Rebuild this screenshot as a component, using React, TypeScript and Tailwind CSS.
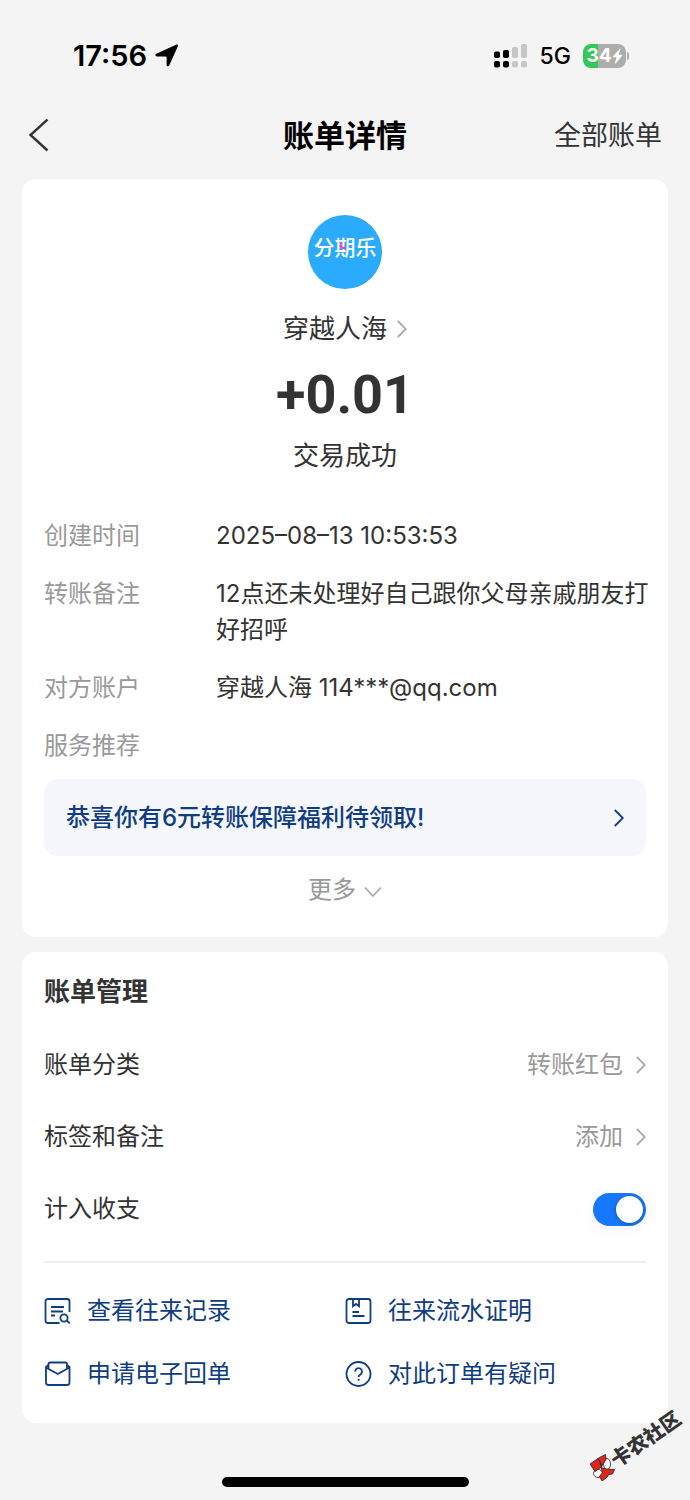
import type { ReactNode } from "react";

const details = [
    { label: "创建时间", value: "2025–08–13 10:53:53" },
    {
        label: "转账备注",
        value: "12点还未处理好自己跟你父母亲戚朋友打好招呼",
    },
    { label: "对方账户", value: "穿越人海 114***@qq.com" },
    { label: "服务推荐", value: "" },
];

export default function App() {
    return (
        <div className="relative flex min-h-screen flex-col bg-[#f4f4f4] font-['Inter','Noto_Sans_CJK_SC',sans-serif] text-2xl leading-9 text-[#333333]">
            <StatusBar />
            <PageHeader />

            <main className="mt-[19px] flex grow flex-col gap-[15px] px-[22px]">
                <BillCard />
                <ManageCard />
            </main>

            <div className="mx-auto mt-[54px] mb-[13px] h-[10px] w-[247px] rounded-full bg-black" />
            <Watermark />
        </div>
    );
}

function StatusBar() {
    return (
        <div className="flex items-center justify-between pt-10 pr-[61px] pl-[73px] leading-8 text-black">
            <div className="flex items-center gap-2">
                <span className="text-[29px] font-semibold">17:56</span>
                <svg viewBox="0 0 24 24" className="size-6">
                    <path d="M21.6.6c1.100-.5 1.900.3 1.400 1.400L14.200 21.600c-.6 1.300-2.600.9-2.600-.6V13.200c0-.5-.3-.8-.8-.8H2c-1.700 0-2.200-2-.6-2.700z" />
                </svg>
            </div>

            <div className="flex items-center gap-3">
                <SignalIcon />
                <span className="text-[23px] font-medium">5G</span>
                <Battery />
            </div>
        </div>
    );
}

function SignalIcon() {
    return (
        <svg viewBox="0 0 34 24" className="h-6 w-[34px]">
            <g fill="#000">
                <rect x="0" y="7.5" width="6" height="6.5" rx="1.8" />
                <rect x="9" y="6" width="6" height="8" rx="1.8" />
                <rect x="0" y="17" width="6" height="6.5" rx="2" />
                <rect x="9" y="17" width="6" height="6.5" rx="2" />
            </g>
            <g fill="#c6c6c6">
                <rect x="18" y="3" width="6" height="11" rx="1.8" />
                <rect x="27" y="0" width="6" height="14" rx="1.8" />
                <rect x="18" y="17" width="6" height="6.5" rx="2" />
                <rect x="27" y="17" width="6" height="6.5" rx="2" />
            </g>
        </svg>
    );
}

function Battery() {
    return (
        <div className="flex items-center gap-px">
            <div className="flex h-6 w-[43px] items-center justify-center rounded-lg bg-linear-to-r from-[#34c759] from-35% to-[#adadad] to-35% text-white">
                <span className="text-[19px] leading-6 font-bold">34</span>
                <svg viewBox="0 0 11 16" className="h-4 w-[11px]" fill="#fff">
                    <path d="M7.8.8.8 8.5c-.3.4-.1.8.3.8h3.5L3 14.8c-.1.6.4.8.8.4l6.5-7.6c.3-.4.1-.8-.4-.8H6.6l1.9-5.500c.2-.6-.3-.9-.7-.5z" />
                </svg>
            </div>
            <div className="h-2 w-[2px] rounded-r-full bg-[#adadad]" />
        </div>
    );
}

function PageHeader() {
    return (
        <header className="mt-10 grid h-12 grid-cols-[1fr_auto_1fr] items-center px-7">
            <button aria-label="返回" className="justify-self-start">
                <svg
                    viewBox="0 0 22 34"
                    className="h-[34px] w-[22px]"
                    fill="none"
                    stroke="#333"
                    strokeWidth="2.4"
                >
                    <path d="M19.5.5 2.5 16l17 15.5" />
                </svg>
            </button>
            <h1 className="text-[31px] font-semibold text-black">账单详情</h1>
            <a href="#bills" className="justify-self-end text-[27px]">
                全部账单
            </a>
        </header>
    );
}

function BillCard() {
    return (
        <section className="flex flex-col rounded-[14px] bg-white px-[22px] pt-9 pb-[29px]">
            <div className="flex flex-col items-center">
                <Avatar />
                <a
                    href="#contact"
                    className="mt-5 flex items-center gap-2.5 text-[26px] leading-10"
                >
                    穿越人海
                    <Chevron className="text-[#aaaaaa]" />
                </a>
                <p className="mt-[14px] font-['Roboto',sans-serif] text-[54px] leading-16 font-bold">
                    +0.01
                </p>
                <p className="mt-[9px] text-[26px] leading-10">交易成功</p>
            </div>

            <dl className="mt-[42px] flex flex-col gap-[22px]">
                {details.map((item) => (
                    <div key={item.label} className="-mr-2 flex">
                        <dt className="w-43 shrink-0 text-[#999999]">
                            {item.label}
                        </dt>
                        <dd>{item.value}</dd>
                    </div>
                ))}
            </dl>

            <button className="mt-[15px] flex h-[77px] items-center justify-between rounded-[14px] bg-[#f5f7fc] px-[22px] font-medium text-[#0f3c82]">
                恭喜你有6元转账保障福利待领取!
                <Chevron className="text-[#0f3c82]" />
            </button>

            <button className="mt-4 flex items-center gap-2 self-center text-[#999999]">
                更多
                <svg
                    viewBox="0 0 18 12"
                    className="mt-1 h-3 w-[18px]"
                    fill="none"
                    stroke="#aaa"
                    strokeWidth="1.8"
                >
                    <path d="m1 1.5 8 8.5 8-8.5" />
                </svg>
            </button>
        </section>
    );
}

function Avatar() {
    return (
        <div className="relative flex size-[74px] justify-center rounded-full bg-[#2aabfd] pt-[17px]">
            <span className="text-[21px] leading-8 font-medium whitespace-nowrap text-white">
                分期乐
            </span>
            <svg
                viewBox="0 0 8 8"
                className="absolute top-[27px] left-[31px] size-2"
                fill="none"
                stroke="#c85cc4"
                strokeWidth="2.4"
            >
                <path d="M2 0v6h5" />
            </svg>
        </div>
    );
}

function Chevron({ className }: { className: string }) {
    return (
        <svg
            viewBox="0 0 10 18"
            className={`h-[18px] w-[10px] ${className}`}
            fill="none"
            stroke="currentColor"
            strokeWidth="1.8"
        >
            <path d="m.8 1 8 8-8 8" />
        </svg>
    );
}

function ManageCard() {
    return (
        <section className="rounded-[14px] bg-white px-[22px] pt-[22px] pb-[31px]">
            <h2 className="text-[26px] leading-9 font-semibold">账单管理</h2>

            <div className="mt-[37px] flex flex-col gap-9">
                <ManageRow label="账单分类" value="转账红包" />
                <ManageRow label="标签和备注" value="添加" />
                <label className="flex items-center justify-between">
                    计入收支
                    <input
                        type="checkbox"
                        role="switch"
                        defaultChecked
                        className="flex h-[33px] w-[53px] appearance-none items-center rounded-full bg-[#d9d9d9] px-[3px] shadow-[0_4px_20px_rgba(0,0,0,0.04)] before:size-[27px] before:rounded-full before:bg-white before:shadow-[0_1px_4px_rgba(0,0,0,0.3)] checked:justify-end checked:bg-[#1677ff]"
                    />
                </label>
            </div>

            <hr className="mt-[34px] border-t-2 border-[#eeeeee]" />

            <div className="mt-[30px] grid grid-cols-2 gap-y-[27px] text-[#0f3c82]">
                <ActionLink label="查看往来记录">
                    <path d="M25.5 14V3.500A2.500 2.500 0 0 0 23 1H4a2.500 2.500 0 0 0-2.500 2.500v19A2.500 2.500 0 0 0 4 25h11.500" />
                    <path d="M7 9h13M7 13.500h12M7 17.500h4" />
                    <circle cx="20" cy="20" r="3.6" />
                    <path d="m22.8 22.500 3 2.800" />
                </ActionLink>
                <ActionLink label="往来流水证明">
                    <rect x="1.5" y="1" width="24" height="24" rx="2.5" />
                    <path d="M8 1v7.300L11 6l3 2.300V1M7.500 14H14M7.500 18h12" />
                </ActionLink>
                <ActionLink label="申请电子回单">
                    <path d="M4.500 4 2 6v15.500A2.500 2.500 0 0 0 4.500 24H23a2.500 2.500 0 0 0 2.500-2.500V6L23 4" />
                    <path d="M4.500 8V3A1.500 1.500 0 0 1 6 1.500h15.500A1.500 1.500 0 0 1 23 3v5M2 6.500 13.800 13l11.700-6.500" />
                </ActionLink>
                <ActionLink label="对此订单有疑问">
                    <circle cx="13.5" cy="13" r="12" />
                    <path d="M10.200 10.500a3.400 3.400 0 1 1 5.200 2.900c-1.300.8-1.800 1.200-1.800 2.600M13.600 17.800v1.900" />
                </ActionLink>
            </div>
        </section>
    );
}

function ManageRow({ label, value }: { label: string; value: string }) {
    return (
        <button className="flex items-center justify-between">
            {label}
            <span className="flex items-center gap-[13px] text-[#999999]">
                {value}
                <Chevron className="text-[#aaaaaa]" />
            </span>
        </button>
    );
}

function ActionLink({
    label,
    children,
}: {
    label: string;
    children: ReactNode;
}) {
    return (
        <a href="#action" className="flex items-center gap-4">
            <svg
                viewBox="0 0 27 27"
                className="size-[27px]"
                fill="none"
                stroke="currentColor"
                strokeWidth="1.8"
            >
                {children}
            </svg>
            {label}
        </a>
    );
}

function Watermark() {
    return (
        <div className="pointer-events-none absolute right-0 bottom-0 size-[110px]">
            <svg viewBox="0 0 110 110" className="size-full">
                <g stroke="#222" strokeWidth=".8" strokeLinejoin="round">
                    <ellipse cx="27" cy="74" rx="3.5" ry="5.5" fill="#fff" />
                    <ellipse cx="18" cy="83.5" rx="4.5" ry="4" fill="#fff" />
                    <path
                        fill="#e0251b"
                        d="m10 74 8-5.500 4 8-7 5zM18.500 68l7-3.500.5 5-4.500 7zM21 77.500l5 1.500 8.500.5-2 4.500-4 .5-1 2.500-5.500 4-2.500-4.500 3-4z"
                    />
                </g>
                <text
                    x="37"
                    y="78"
                    transform="rotate(-35 37 78)"
                    fontSize="20"
                    fontWeight="900"
                    fill="#333"
                >
                    卡农社区
                </text>
            </svg>
        </div>
    );
}
